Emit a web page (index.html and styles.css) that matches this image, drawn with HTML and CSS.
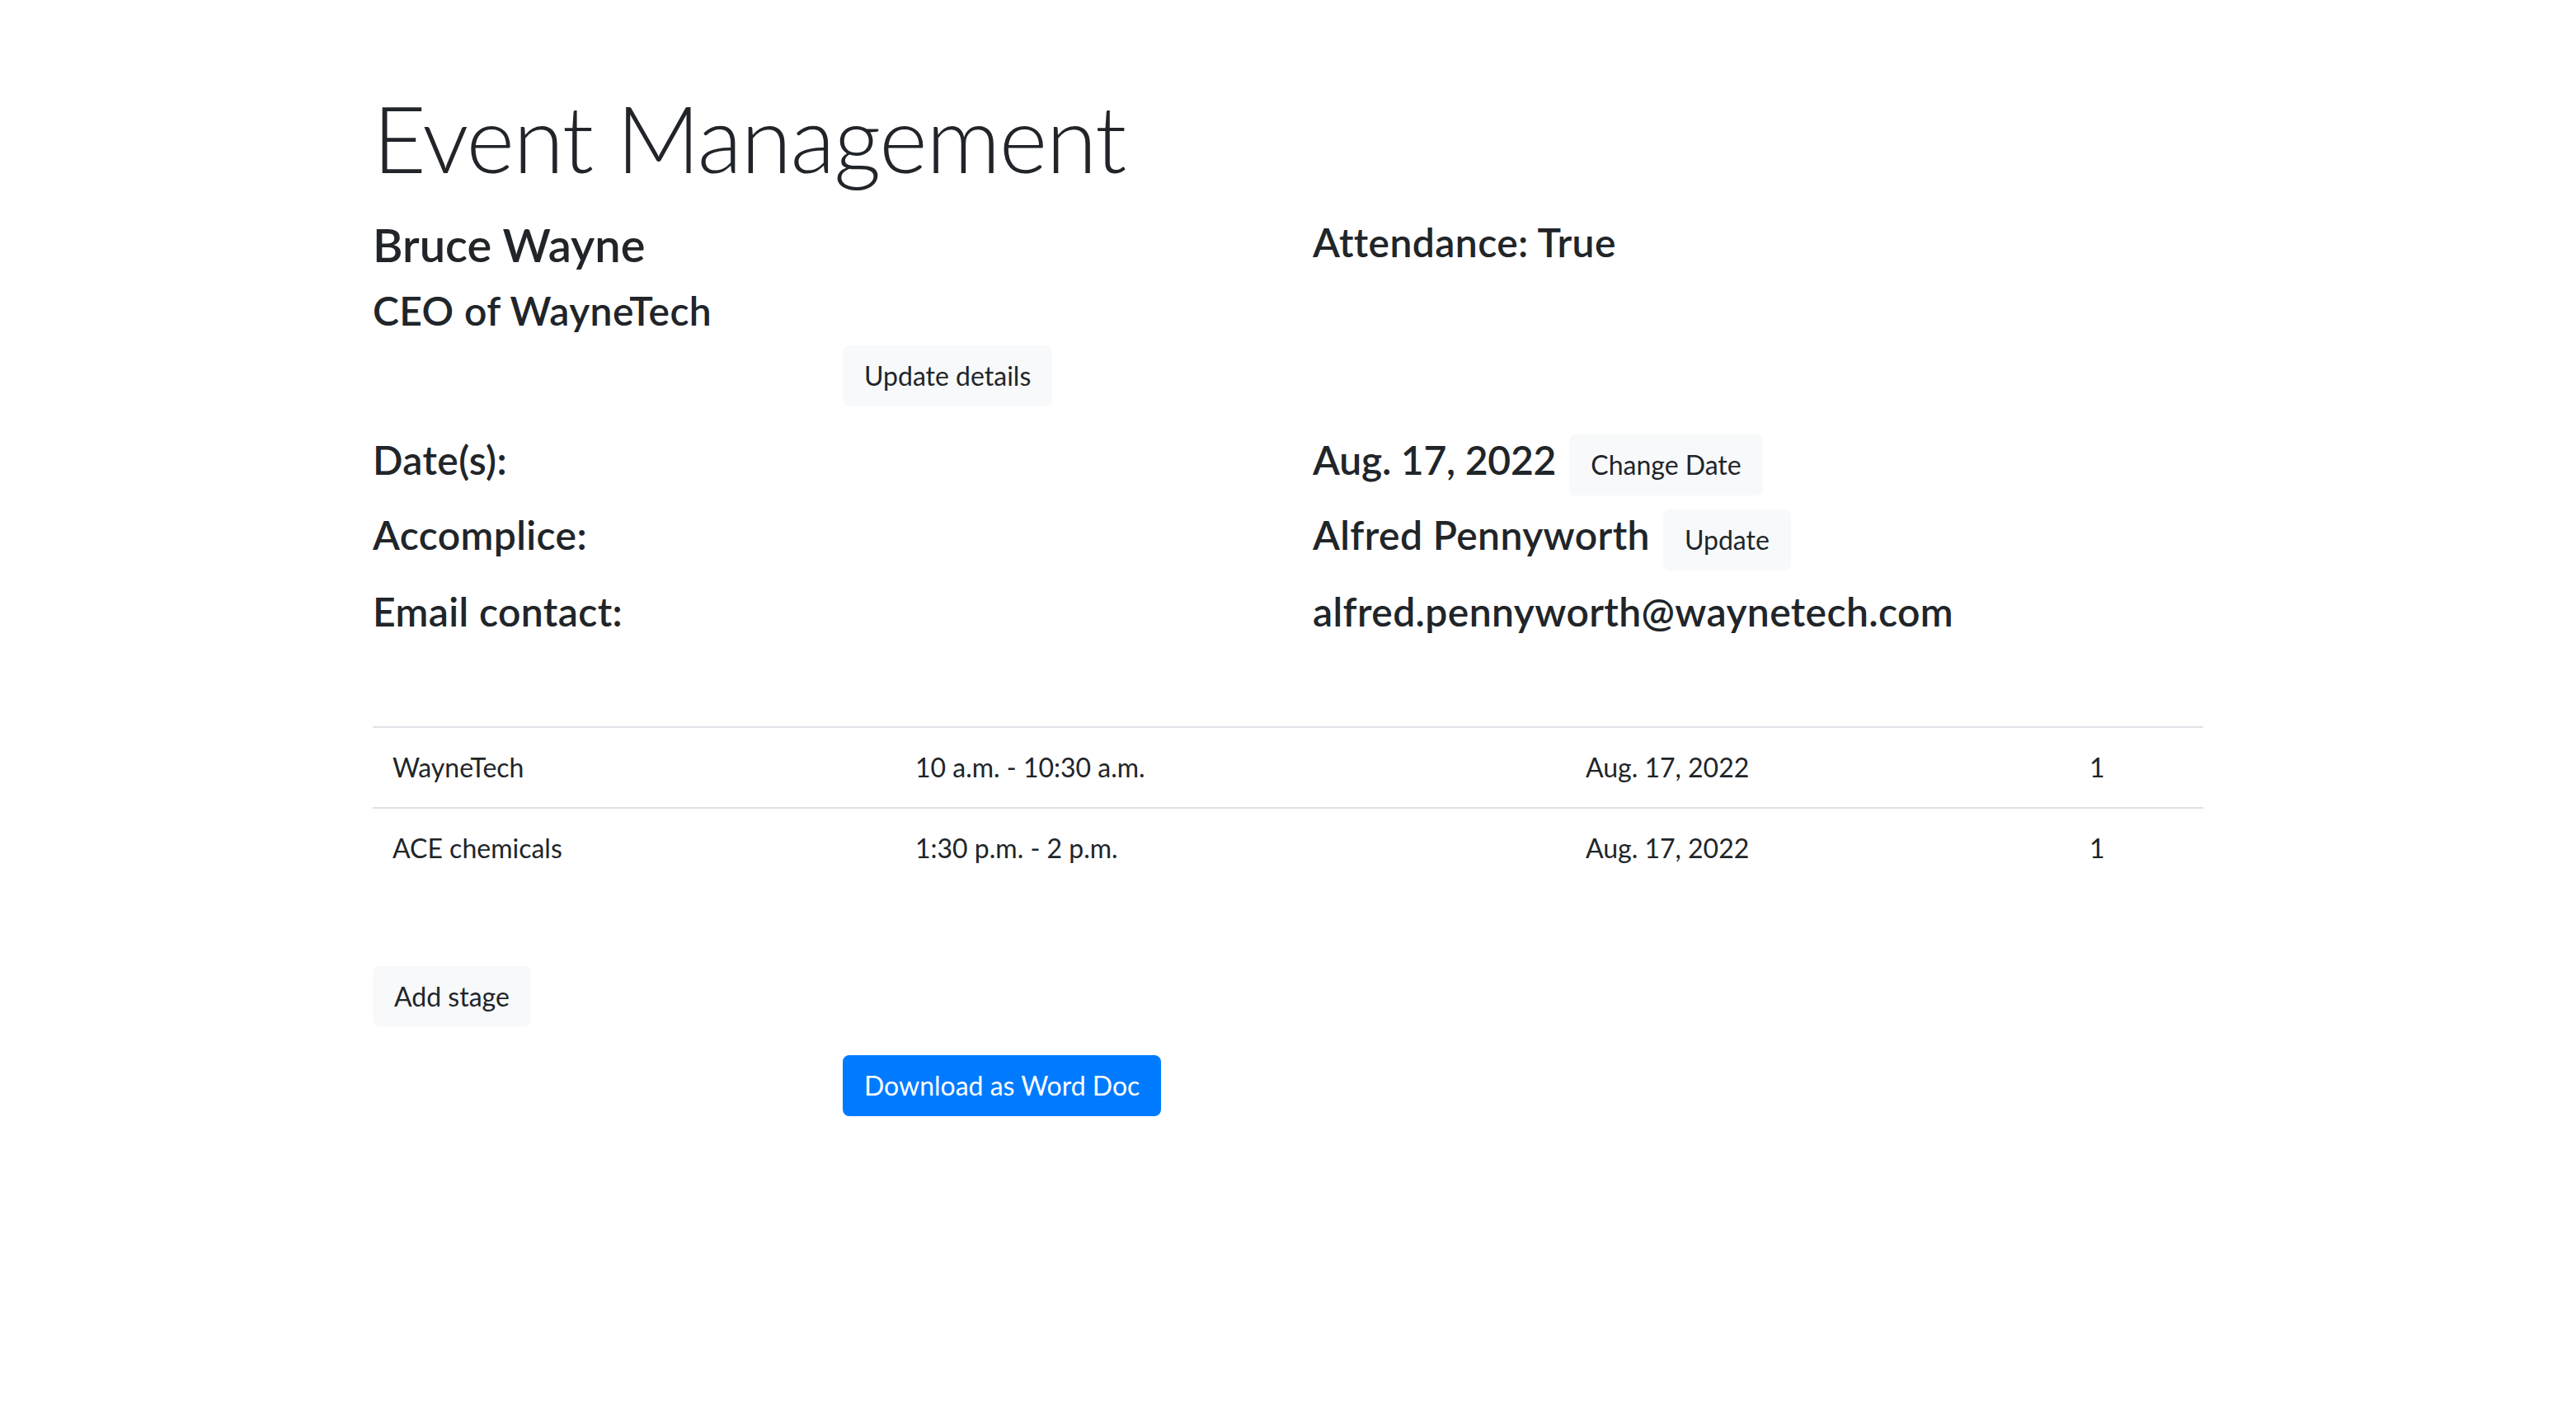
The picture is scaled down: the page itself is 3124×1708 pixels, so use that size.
FILE: index.html
```html
<!DOCTYPE html>
<html lang="en">
<head>
<meta charset="utf-8">
<title>Event Management</title>
<link rel="stylesheet" href="styles.css">
</head>
<body>
<div class="container">
  <h1 class="display">Event Management</h1>

  <div class="row top-row">
    <div class="col">
      <h3 class="h3">Bruce Wayne</h3>
      <h4 class="h4 role">CEO of WayneTech</h4>
    </div>
    <div class="col">
      <h4 class="h4">Attendance: True</h4>
    </div>
  </div>

  <div class="offset-line">
    <button class="btn btn-light">Update details</button>
  </div>

  <div class="info">
    <div class="info-row">
      <div class="col"><h4 class="h4">Date(s):</h4></div>
      <div class="col inline"><h4 class="h4 date">Aug. 17, 2022</h4><button class="btn btn-light">Change Date</button></div>
    </div>
    <div class="info-row">
      <div class="col"><h4 class="h4">Accomplice:</h4></div>
      <div class="col inline"><h4 class="h4">Alfred Pennyworth</h4><button class="btn btn-light">Update</button></div>
    </div>
    <div class="info-row text-only">
      <div class="col"><h4 class="h4">Email contact:</h4></div>
      <div class="col inline"><h4 class="h4">alfred.pennyworth@waynetech.com</h4></div>
    </div>
  </div>

  <table class="table">
    <colgroup>
      <col class="c1"><col class="c2"><col class="c3"><col class="c4">
    </colgroup>
    <tbody>
      <tr><td>WayneTech</td><td>10 a.m. - 10:30 a.m.</td><td>Aug. 17, 2022</td><td>1</td></tr>
      <tr><td>ACE chemicals</td><td>1:30 p.m. - 2 p.m.</td><td>Aug. 17, 2022</td><td>1</td></tr>
    </tbody>
  </table>

  <div class="add-line">
    <button class="btn btn-light">Add stage</button>
  </div>

  <div class="offset-line">
    <button class="btn btn-primary">Download as Word Doc</button>
  </div>
</div>
</body>
</html>
```

FILE: styles.css
```css
* { box-sizing: border-box; }

html, body {
  margin: 0;
  padding: 0;
  background: #ffffff;
}

body {
  font-family: "Lato", "Open Sans", "Liberation Sans", sans-serif;
  font-size: 32px;
  line-height: 1.5;
  color: #212529;
}

.container {
  width: 2280px;
  margin: 0 auto;
  padding: 100px 30px 0;
}

.display {
  font-size: 112px;
  font-weight: 300;
  line-height: 1.2;
  letter-spacing: -1.5px;
  margin: 0 0 29px;
}

.row {
  display: flex;
  margin: 0 -30px;
}

.col {
  width: 50%;
  padding: 0 30px;
}

.h3 {
  font-size: 56px;
  font-weight: 600;
  line-height: 1.2;
  margin: 0 0 17px;
}

.h4 {
  font-size: 48px;
  font-weight: 600;
  line-height: 1.2;
  letter-spacing: 0.4px;
  margin: 0;
}

.h4.date { letter-spacing: -0.2px; }

.top-row .col > .h4:first-child { margin-top: 2px; }

.role { margin-bottom: 14px; }

.offset-line {
  height: 74px;
  padding-left: 570px;
}

.btn {
  display: inline-block;
  height: 74px;
  font-family: inherit;
  font-size: 32px;
  line-height: 48px;
  font-weight: 400;
  padding: 11px 24px 13px;
  border: 2px solid transparent;
  border-radius: 8px;
  cursor: pointer;
  vertical-align: top;
}

.btn-light {
  background: #f8f9fa;
  border-color: #f8f9fa;
  color: #212529;
}

.btn-primary {
  background: #007bff;
  border-color: #007bff;
  color: #ffffff;
}

.info {
  margin-top: 34px;
}

.info-row {
  display: flex;
  align-items: baseline;
  height: 74px;
  margin: 0 -30px 17px;
}

.info-row.text-only {
  padding-top: 4px;
}

.inline {
  display: flex;
  align-items: baseline;
  gap: 16px;
}

.table {
  width: 100%;
  table-layout: fixed;
  border-collapse: collapse;
  margin: 98px 0 0;
}

.c1 { width: 634px; }
.c2 { width: 813px; }
.c3 { width: 611px; }
.c4 { width: 162px; }

.table td {
  padding: 24px;
  line-height: 48px;
  border-top: 2px solid #dee2e6;
  vertical-align: top;
  white-space: nowrap;
}

.add-line {
  height: 74px;
  margin-top: 95px;
  margin-bottom: 34px;
}
```
